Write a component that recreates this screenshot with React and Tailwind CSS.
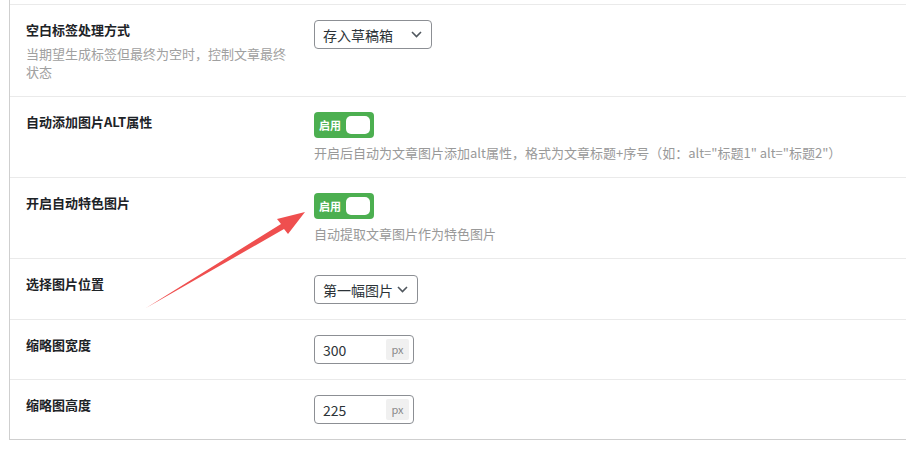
import React from 'react';

const font = { fontFamily: '"Noto Sans CJK SC", "Noto Sans", sans-serif' };

function Chevron() {
    return (
        <svg width="11" height="7" viewBox="0 0 11 7" fill="none" className="shrink-0">
            <path d="M1 1l4.5 4.5L10 1" stroke="#50575e" strokeWidth="1.6" />
        </svg>
    );
}

function SelectBox({ value, width }) {
    return (
        <div className={`flex items-center justify-between h-[29px] ${width} border border-[#8c8f94] rounded-[4px] pl-2 pr-[9px] text-[14px] text-[#2c3338] bg-white`}>
            <span className="leading-none">{value}</span>
            <Chevron />
        </div>
    );
}

function Toggle() {
    return (
        <div className="flex items-center justify-between w-[60px] h-[26px] rounded-[4px] bg-[#4caf50] pl-[5px] pr-1">
            <span className="text-[11px] font-bold text-white leading-none">启用</span>
            <span className="w-6 h-[18px] rounded-[5px] bg-white" />
        </div>
    );
}

function PxInput({ value }) {
    return (
        <div className="flex items-center justify-between w-[100px] h-[29px] border border-[#8c8f94] rounded-[4px] pl-2 pr-1 bg-white">
            <span className="text-[14px] text-[#2c3338] leading-none">{value}</span>
            <span className="flex items-center justify-center w-[23px] h-[21px] rounded-[2px] bg-[#f0f0f0] text-[11px] text-[#8a8a8a]">px</span>
        </div>
    );
}

function Row({ label, desc, children, note }) {
    return (
        <div className="flex border-t border-[#eaeaea] pt-[15px] pb-[15px]">
            <div className="w-[304px] shrink-0 pl-4">
                <div className="text-[13px] leading-5 font-bold text-[#1d2327]">{label}</div>
                {desc && (
                    <div className="w-[272px] mt-[5px] text-[13px] leading-[18px] text-[#a0a0a0]">{desc}</div>
                )}
            </div>
            <div className="flex flex-col items-start">
                {children}
                {note && <div className="mt-[6px] text-[13px] leading-[18px] text-[#999]">{note}</div>}
            </div>
        </div>
    );
}

export default function App() {
    return (
        <div className="relative w-[906px] h-[454px] overflow-hidden bg-white" style={font}>
            <div className="ml-[9px] border-l border-b border-[#cfcfcf]">
                <div className="h-1" />
                <Row label="空白标签处理方式" desc="当期望生成标签但最终为空时，控制文章最终状态">
                    <SelectBox value="存入草稿箱" width="w-[118px]" />
                </Row>
                <Row label="自动添加图片ALT属性" note={'开启后自动为文章图片添加alt属性，格式为文章标题+序号（如：alt="标题1" alt="标题2"）'}>
                    <Toggle />
                </Row>
                <Row label="开启自动特色图片" note="自动提取文章图片作为特色图片">
                    <Toggle />
                </Row>
                <Row label="选择图片位置">
                    <div className="mt-px">
                        <SelectBox value="第一幅图片" width="w-[104px]" />
                    </div>
                </Row>
                <Row label="缩略图宽度">
                    <PxInput value="300" />
                </Row>
                <Row label="缩略图高度">
                    <PxInput value="225" />
                </Row>
            </div>

            {/* red annotation arrow */}
            <svg className="absolute left-0 top-0 pointer-events-none" width="906" height="454">
                <polygon
                    points="146,308 281,224 277,219 305,212 288,234 284,229"
                    fill="#ef4f4f"
                />
            </svg>
        </div>
    );
}
